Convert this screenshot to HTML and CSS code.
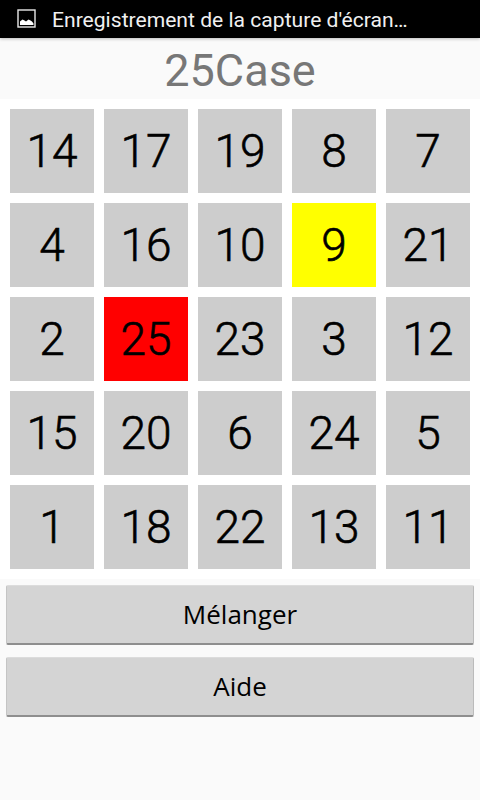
FILE: index.html
```html
<!DOCTYPE html>
<html lang="fr">
<head>
    <meta charset="UTF-8">
    <meta name="viewport" content="width=device-width, initial-scale=1.0">
    <title>25Case</title>
    <link rel="stylesheet" href="styles.css">
</head>
<body>
    <div class="status-bar">
        <svg class="status-icon" width="20" height="20" viewBox="0 0 20 20">
            <rect x="1" y="1" width="17" height="17" fill="#000" stroke="#e8e8e8" stroke-width="1.4"/>
            <path d="M3 16V12.5L5.5 10.5L7.5 11.5L9 12.5L11.5 10.5L13.5 11.5L15 12.5L16.5 14.5V16Z" fill="#fff"/>
        </svg>
        <span class="status-text">Enregistrement de la capture d'écran…</span>
    </div>
    <h1 class="title">25Case</h1>
    <div class="board">
        <div class="cell">14</div>
        <div class="cell">17</div>
        <div class="cell">19</div>
        <div class="cell">8</div>
        <div class="cell">7</div>
        <div class="cell">4</div>
        <div class="cell">16</div>
        <div class="cell">10</div>
        <div class="cell next">9</div>
        <div class="cell">21</div>
        <div class="cell">2</div>
        <div class="cell current">25</div>
        <div class="cell">23</div>
        <div class="cell">3</div>
        <div class="cell">12</div>
        <div class="cell">15</div>
        <div class="cell">20</div>
        <div class="cell">6</div>
        <div class="cell">24</div>
        <div class="cell">5</div>
        <div class="cell">1</div>
        <div class="cell">18</div>
        <div class="cell">22</div>
        <div class="cell">13</div>
        <div class="cell">11</div>
    </div>
    <div class="actions">
        <button class="action">Mélanger</button>
        <button class="action">Aide</button>
    </div>
</body>
</html>
```

FILE: styles.css
```css
html, body {
    height: 100%;
}
body {
    margin: 0;
    height: 800px;
    overflow: hidden;
    background-color: #fafafa;
    font-family: Roboto, sans-serif;
}
.status-bar {
    display: flex;
    align-items: center;
    height: 38px;
    padding-left: 17px;
    box-sizing: border-box;
    background-color: #000;
    box-shadow: 0 1px 3px rgba(0,0,0,0.25);
    color: #fff;
}
.status-icon {
    flex: none;
}
.status-text {
    margin-left: 15px;
    font-size: 21.1px;
    color: #f0f0f0;
    white-space: nowrap;
}
.title {
    height: 61px;
    margin: 0;
    font-size: 45px;
    font-weight: 400;
    line-height: 66px;
    text-align: center;
    color: #777;
}
.board {
    display: grid;
    grid-template-columns: repeat(5, 84px);
    grid-auto-rows: 84px;
    gap: 10px;
    padding: 10px;
    background-color: #fff;
}
.cell {
    display: flex;
    align-items: center;
    justify-content: center;
    background-color: #cdcdcd;
    font-size: 46px;
    font-weight: 300;
    -webkit-text-stroke: 0.6px #000;
    color: #000;
}
.cell.next {
    background-color: #ffff00;
}
.cell.current {
    background-color: #ff0000;
}
.actions {
    display: flex;
    flex-direction: column;
    gap: 12px;
    padding: 6px 6px 0;
}
.action {
    height: 60px;
    padding: 0 0 1px;
    border: none;
    border-top: 1px solid #dcdcdc;
    border-bottom: 2px solid #8e8e8e;
    border-right: 1px solid #bbb;
    border-left: 1px solid #c4c4c4;
    border-radius: 2px;
    background-color: #d4d4d4;
    font-family: "Open Sans", sans-serif;
    font-size: 26px;
    color: #000;
}
```
